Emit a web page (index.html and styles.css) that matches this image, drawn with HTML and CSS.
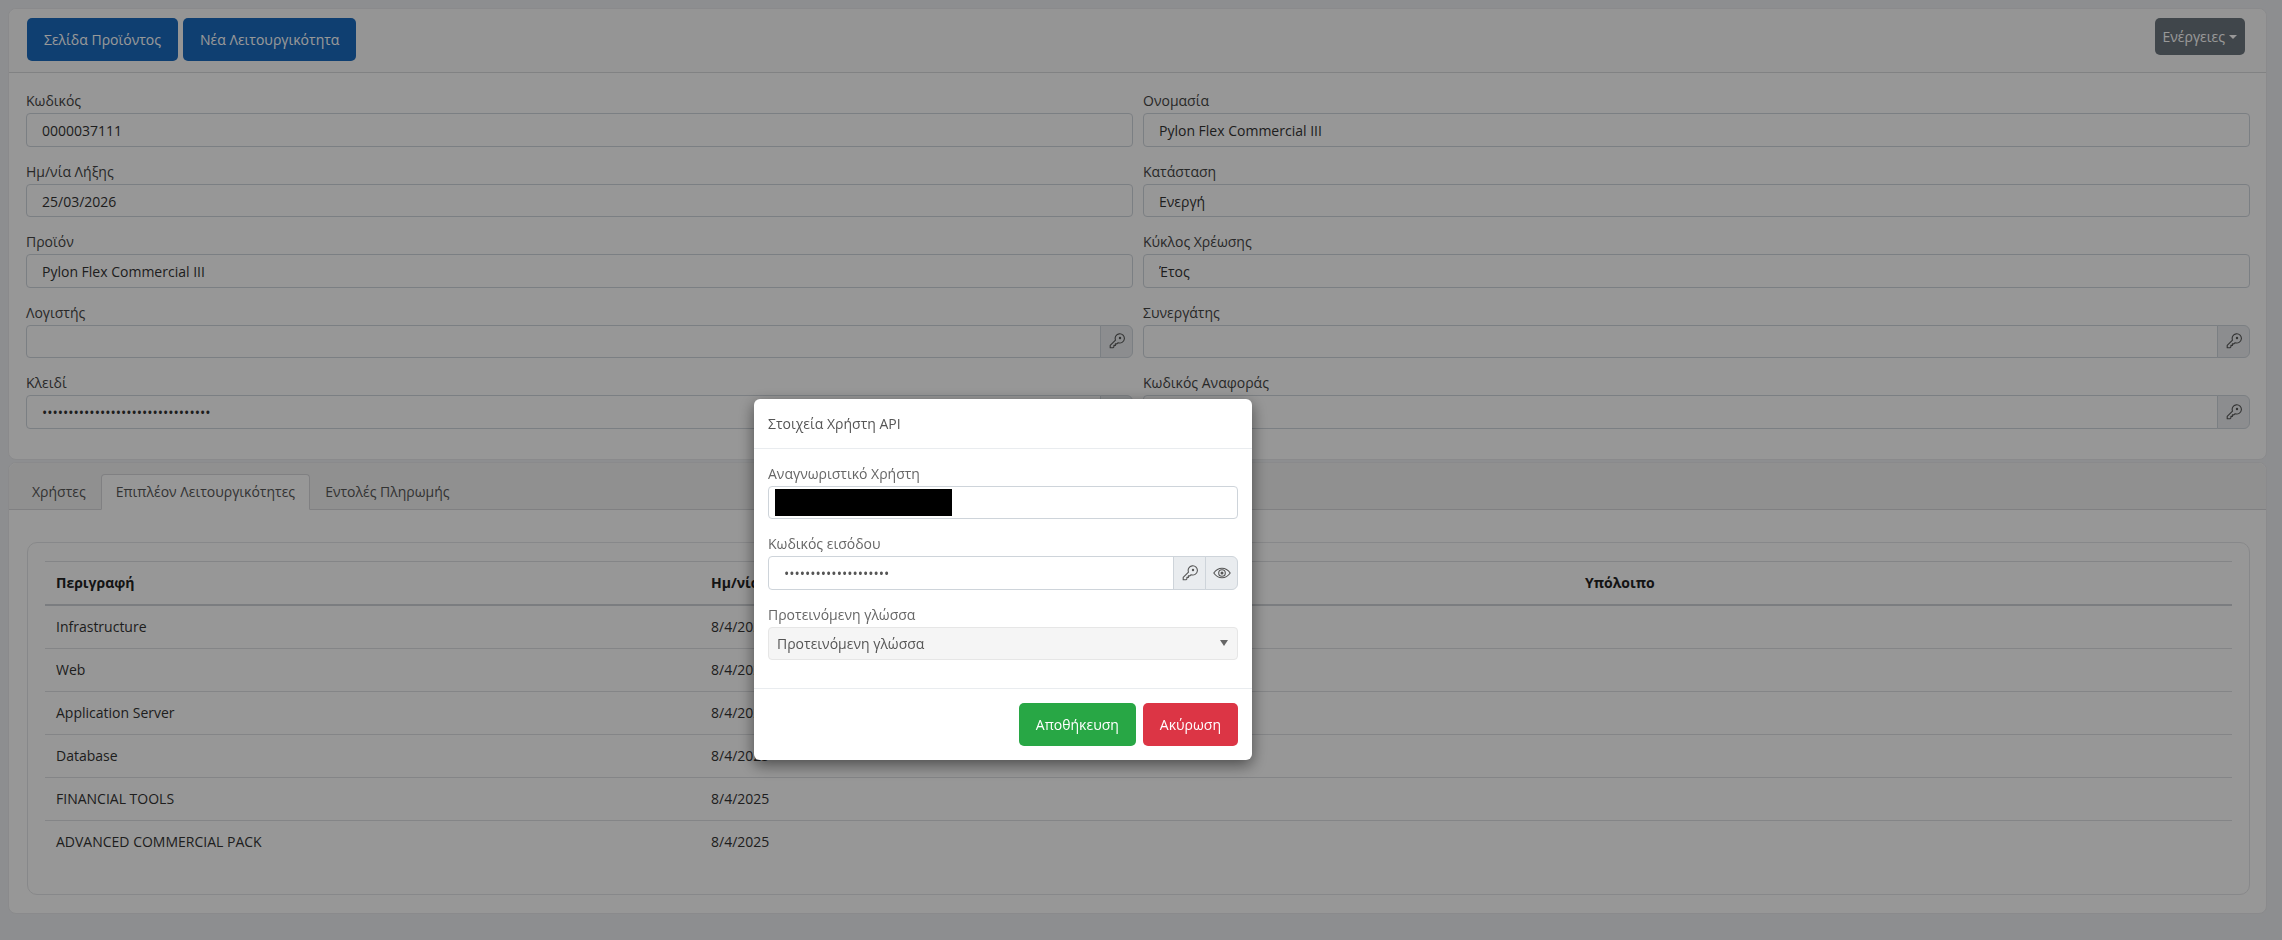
FILE: index.html
```html
<!DOCTYPE html>
<html lang="el">
<head>
    <meta charset="UTF-8">
    <meta name="viewport" content="width=device-width, initial-scale=1.0">
    <title>Συνδρομή</title>
    <link rel="stylesheet" href="styles.css">
</head>
<body>
    <svg class="sprite" width="0" height="0" aria-hidden="true">
        <symbol id="icon-key" viewBox="0 0 16 16">
            <path d="M1.2 14.8v-2.4l5.3-5.3a4.6 4.6 0 1 1 2.6 2.6L7.9 10.900H6.400v1.500H4.900v1.400l-1 1z" fill="none" stroke="currentColor" stroke-width="1.100" stroke-linejoin="round"/>
            <circle cx="11" cy="5" r="1.200" fill="currentColor"/>
        </symbol>
        <symbol id="icon-eye" viewBox="0 0 18 12">
            <path d="M.8 6C3 2.800 5.800 1.200 9 1.200S15 2.800 17.200 6C15 9.200 12.200 10.800 9 10.800S3 9.200 .8 6z" fill="none" stroke="currentColor" stroke-width="1.100"/>
            <circle cx="9" cy="6" r="3.300" fill="none" stroke="currentColor" stroke-width="1.100"/>
            <circle cx="9" cy="6" r="1.500" fill="currentColor"/>
        </symbol>
    </svg>

    <div class="card">
        <div class="card-header">
            <div class="btn-row">
                <button class="btn btn-primary">Σελίδα Προϊόντος</button>
                <button class="btn btn-primary">Νέα Λειτουργικότητα</button>
            </div>
            <button class="btn btn-secondary">Ενέργειες <span class="caret"></span></button>
        </div>
        <div class="card-body form-grid">
            <div class="field">
                <label>Κωδικός</label>
                <input class="input" type="text" readonly value="0000037111">
            </div>
            <div class="field">
                <label>Ονομασία</label>
                <input class="input" type="text" readonly value="Pylon Flex Commercial III">
            </div>
            <div class="field">
                <label>Ημ/νία Λήξης</label>
                <input class="input" type="text" readonly value="25/03/2026">
            </div>
            <div class="field">
                <label>Κατάσταση</label>
                <input class="input" type="text" readonly value="Ενεργή">
            </div>
            <div class="field">
                <label>Προϊόν</label>
                <input class="input" type="text" readonly value="Pylon Flex Commercial III">
            </div>
            <div class="field">
                <label>Κύκλος Χρέωσης</label>
                <input class="input" type="text" readonly value="Έτος">
            </div>
            <div class="field">
                <label>Λογιστής</label>
                <div class="input-group">
                    <input class="input" type="text" readonly>
                    <span class="addon"><svg class="icon-key"><use href="#icon-key"/></svg></span>
                </div>
            </div>
            <div class="field">
                <label>Συνεργάτης</label>
                <div class="input-group">
                    <input class="input" type="text" readonly>
                    <span class="addon"><svg class="icon-key"><use href="#icon-key"/></svg></span>
                </div>
            </div>
            <div class="field">
                <label>Κλειδί</label>
                <div class="input-group">
                    <input class="input" type="password" readonly value="12345678901234567890123456789012">
                    <span class="addon"><svg class="icon-key"><use href="#icon-key"/></svg></span>
                </div>
            </div>
            <div class="field">
                <label>Κωδικός Αναφοράς</label>
                <div class="input-group">
                    <input class="input" type="text" readonly>
                    <span class="addon"><svg class="icon-key"><use href="#icon-key"/></svg></span>
                </div>
            </div>
        </div>
    </div>

    <div class="card card-tabs">
        <div class="tabs">
            <a class="tab">Χρήστες</a>
            <a class="tab active">Επιπλέον Λειτουργικότητες</a>
            <a class="tab">Εντολές Πληρωμής</a>
        </div>
        <div class="tab-content">
            <div class="inner-card">
                <table>
                    <colgroup>
                        <col class="col-desc">
                        <col class="col-date">
                        <col class="col-date">
                        <col>
                    </colgroup>
                    <thead>
                        <tr>
                            <th>Περιγραφή</th>
                            <th>Ημ/νία Έναρξης</th>
                            <th></th>
                            <th>Υπόλοιπο</th>
                        </tr>
                    </thead>
                    <tbody>
                        <tr><td>Infrastructure</td><td>8/4/2025</td><td></td><td></td></tr>
                        <tr><td>Web</td><td>8/4/2025</td><td></td><td></td></tr>
                        <tr><td>Application Server</td><td>8/4/2025</td><td></td><td></td></tr>
                        <tr><td>Database</td><td>8/4/2025</td><td></td><td></td></tr>
                        <tr><td>FINANCIAL TOOLS</td><td>8/4/2025</td><td></td><td></td></tr>
                        <tr><td>ADVANCED COMMERCIAL PACK</td><td>8/4/2025</td><td></td><td></td></tr>
                    </tbody>
                </table>
            </div>
        </div>
    </div>

    <div class="backdrop"></div>

    <div class="modal">
        <div class="modal-header">Στοιχεία Χρήστη API</div>
        <div class="modal-body">
            <div class="field">
                <label>Αναγνωριστικό Χρήστη</label>
                <div class="input masked-input"><span class="redacted"></span></div>
            </div>
            <div class="field">
                <label>Κωδικός εισόδου</label>
                <div class="input-group">
                    <input class="input" type="password" readonly value="12345678901234567890">
                    <span class="addon"><svg class="icon-key"><use href="#icon-key"/></svg></span>
                    <span class="addon"><svg class="icon-eye"><use href="#icon-eye"/></svg></span>
                </div>
            </div>
            <div class="field">
                <label>Προτεινόμενη γλώσσα</label>
                <div class="select">
                    <span>Προτεινόμενη γλώσσα</span>
                    <span class="select-arrow"></span>
                </div>
            </div>
        </div>
        <div class="modal-footer">
            <button class="btn btn-success">Αποθήκευση</button>
            <button class="btn btn-danger">Ακύρωση</button>
        </div>
    </div>
</body>
</html>
```

FILE: styles.css
```css
* {
    box-sizing: border-box;
    font-family: "Open Sans", "Noto Sans", sans-serif;
}

html, body {
    height: 100%;
}

body {
    margin: 0;
    padding: 8px 15px 0 8px;
    background: #ebedf0;
    color: #333;
    font-size: 14px;
    line-height: 21px;
    overflow: hidden;
}

.sprite {
    position: absolute;
}

.card {
    background: #fcfcfc;
    border: 1px solid #e6e7e9;
    border-radius: 8px;
}

.card-header {
    display: flex;
    justify-content: space-between;
    align-items: flex-start;
    height: 63.500px;
    padding: 9px 21px 0 18px;
    background: #f9f9f9;
    border-bottom: 1px solid #d8d9db;
    border-radius: 8px 8px 0 0;
}

.btn-row {
    display: flex;
    gap: 5px;
}

.btn {
    height: 43px;
    padding: 0 16px;
    border: 1px solid transparent;
    border-radius: 5px;
    color: #fff;
    font-size: 14px;
}

.btn-primary {
    background: #1a69bc;
}

.btn-secondary {
    display: flex;
    align-items: center;
    gap: 4px;
    height: 37px;
    padding: 0 7px;
    background: #6c757d;
}

.btn-success {
    background: #28a745;
}

.btn-danger {
    background: #dc3545;
}

.caret {
    width: 0;
    height: 0;
    border-top: 4px solid #fff;
    border-left: 4px solid transparent;
    border-right: 4px solid transparent;
}

.card-body {
    padding: 17.500px 16px 16px 17px;
}

.form-grid {
    display: grid;
    grid-template-columns: 1fr 1fr;
    column-gap: 10px;
}

.field {
    margin-bottom: 14px;
}

.field label {
    display: block;
    margin-bottom: 2px;
    color: #444;
}

.input {
    display: block;
    width: 100%;
    height: 33.500px;
    padding: 2px 15px 0;
    background: transparent;
    border: 1px solid #ced4da;
    border-radius: 4px;
    color: #333;
    font-size: 14px;
    outline: none;
}

.input-group {
    display: flex;
}

.input-group .input {
    flex: 1;
    min-width: 0;
    border-radius: 4px 0 0 4px;
}

.addon {
    display: flex;
    align-items: center;
    justify-content: center;
    width: 33px;
    height: 33.500px;
    margin-left: -1px;
    background: #e9ecef;
    border: 1px solid #ced4da;
    color: #555;
}

.addon:last-child {
    border-radius: 0 6px 6px 0;
}

.icon-key {
    width: 16px;
    height: 16px;
}

.icon-eye {
    width: 18px;
    height: 12px;
}

.card-tabs {
    margin-top: 2px;
    height: 452.500px;
    background: #fcfcfc;
}

.tabs {
    display: flex;
    align-items: flex-end;
    height: 47px;
    padding-left: 8px;
    background: #f0f0f0;
    border-bottom: 1px solid #d5d6d9;
    border-radius: 8px 8px 0 0;
}

.tab {
    height: 36px;
    margin-bottom: -1px;
    padding: 6px 14px 0;
    border: 1px solid transparent;
    color: #555;
}

.tab.active {
    background: #fcfcfc;
    border-color: #d5d6d9;
    border-bottom-color: #fcfcfc;
    border-radius: 4px 4px 0 0;
}

.tab-content {
    padding: 32px 16px 0 18px;
}

.inner-card {
    height: 353px;
    padding: 18px 17px;
    background: #fcfcfc;
    border: 1px solid #e2e3e6;
    border-radius: 10px;
}

table {
    width: 100%;
    border-collapse: collapse;
    table-layout: fixed;
}

.col-desc {
    width: 655px;
}

.col-date {
    width: 437px;
}

th, td {
    height: 43px;
    padding: 0 11px;
    text-align: left;
    white-space: nowrap;
}

th {
    height: 44px;
    border-top: 1px solid #dcdee1;
    border-bottom: 2px solid #ced1d5;
    color: #222;
    font-weight: 700;
}

td {
    border-bottom: 1px solid #dcdee1;
    color: #333;
}

tbody tr:last-child td {
    border-bottom: none;
}

.backdrop {
    position: fixed;
    inset: 0;
    background: rgba(0, 0, 0, 0.4);
}

.modal {
    position: fixed;
    left: 754px;
    top: 399px;
    width: 498px;
    height: 361px;
    background: #fff;
    border-radius: 6px;
    box-shadow: 0 5px 15px rgba(0, 0, 0, 0.5);
}

.modal-header {
    height: 50px;
    padding: 14px;
    border-bottom: 1px solid #e9ecef;
    color: #555;
}

.modal-body {
    padding: 14px 14px 0;
    height: 239px;
}

.modal-body .field label {
    color: #666;
}

.modal-body .input-group .input {
    color: #555;
}

.masked-input {
    height: 33px;
    padding: 2px 6px;
    background: #fff;
}

.redacted {
    display: block;
    width: 177px;
    height: 27px;
    background: #000;
}

.select {
    display: flex;
    justify-content: space-between;
    align-items: center;
    height: 33px;
    padding: 0 9px 0 8px;
    background: #f5f5f5;
    border: 1px solid #e6e6e6;
    border-radius: 4px;
    color: #555;
}

.select-arrow {
    width: 0;
    height: 0;
    border-top: 6px solid #666;
    border-left: 4px solid transparent;
    border-right: 4px solid transparent;
}

.modal-footer {
    display: flex;
    justify-content: flex-end;
    gap: 7px;
    padding: 14px;
    border-top: 1px solid #e9ecef;
}
```
